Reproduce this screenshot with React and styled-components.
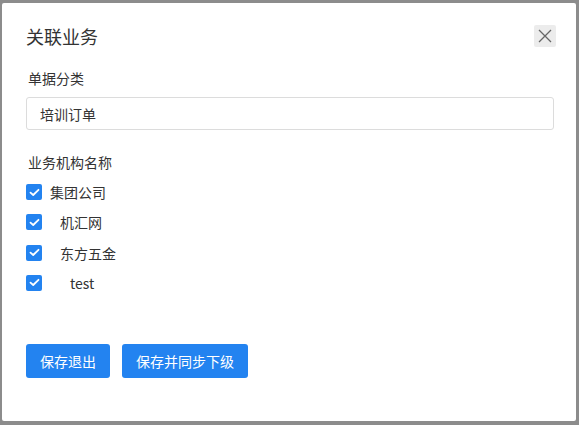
import React from "react";
import styled, { createGlobalStyle } from "styled-components";

const Global = createGlobalStyle`
  html, body { margin: 0; padding: 0; background: #8c8c8c; }
  body { font-family: "Microsoft YaHei", "Noto Sans CJK SC", "Noto Sans", sans-serif; }
  * { box-sizing: border-box; }
`;

const Backdrop = styled.div`
  width: 579px;
  height: 425px;
  padding: 3px 3px 4px 2px;
  background: #8c8c8c;
`;

const Modal = styled.div`
  width: 574px;
  height: 418px;
  background: #fff;
  border-radius: 2px;
  padding: 21px 22px 0 24px;
  display: flex;
  flex-direction: column;
  color: #333;
`;

const Header = styled.div`
  display: flex;
  align-items: center;
  justify-content: space-between;
  height: 24px;
`;

const Title = styled.h2`
  margin: 0;
  font-size: 18px;
  font-weight: 400;
  color: #333;
  line-height: 24px;
`;

const CloseButton = styled.button`
  width: 22px;
  height: 22px;
  margin-top: 0;
  margin-right: -2px;
  border: none;
  border-radius: 2px;
  background: #ececec;
  display: flex;
  align-items: center;
  justify-content: center;
  padding: 0;
`;

const Label = styled.div`
  font-size: 14px;
  line-height: 20px;
  color: #333;
  padding-left: 2px;
  margin-top: ${(p) => p.$mt}px;
`;

const Input = styled.div`
  margin-top: 9px;
  height: 33px;
  width: 528px;
  border: 1px solid #dcdcdc;
  border-radius: 3px;
  display: flex;
  align-items: center;
  padding-left: 13px;
  font-size: 14px;
  color: #333;
`;

const List = styled.div`
  margin-top: 12px;
  display: flex;
  flex-direction: column;
  gap: 14.3px;
`;

const Row = styled.label`
  display: flex;
  align-items: center;
  height: 16px;
  font-size: 14px;
  color: #333;
`;

const Box = styled.span`
  width: 16px;
  height: 16px;
  border-radius: 2px;
  background: #2383f0;
  display: flex;
  align-items: center;
  justify-content: center;
  flex: none;
`;

const RowText = styled.span`
  margin-left: ${(p) => p.$indent}px;
  line-height: 16px;
`;

const Actions = styled.div`
  margin-top: 53px;
  display: flex;
  gap: 12px;
`;

const Button = styled.button`
  height: 34px;
  padding: 0 ${(p) => p.$px}px;
  border: none;
  border-radius: 3px;
  background: #2383f0;
  color: #fff;
  font-family: inherit;
  font-size: 14px;
`;

const Check = () => (
  <svg width="11" height="9" viewBox="0 0 11 9">
    <path d="M1.5 4.6 L4.2 7 L9.5 1.8" fill="none" stroke="#fff" strokeWidth="1.8" strokeLinecap="round" strokeLinejoin="round" />
  </svg>
);

const items = [
  { name: "集团公司", indent: 8 },
  { name: "机汇网", indent: 18 },
  { name: "东方五金", indent: 18 },
  { name: "test", indent: 28 },
];

export default function App() {
  return (
    <>
      <Global />
      <Backdrop>
        <Modal>
          <Header>
            <Title>关联业务</Title>
            <CloseButton aria-label="关闭">
              <svg width="14" height="14" viewBox="0 0 14 14">
                <path d="M1 1 L13 13 M13 1 L1 13" stroke="#666" strokeWidth="1.3" />
              </svg>
            </CloseButton>
          </Header>
          <Label $mt={20}>单据分类</Label>
          <Input>培训订单</Input>
          <Label $mt={22}>业务机构名称</Label>
          <List>
            {items.map((it) => (
              <Row key={it.name}>
                <Box>
                  <Check />
                </Box>
                <RowText $indent={it.indent}>{it.name}</RowText>
              </Row>
            ))}
          </List>
          <Actions>
            <Button $px={14}>保存退出</Button>
            <Button $px={14}>保存并同步下级</Button>
          </Actions>
        </Modal>
      </Backdrop>
    </>
  );
}
